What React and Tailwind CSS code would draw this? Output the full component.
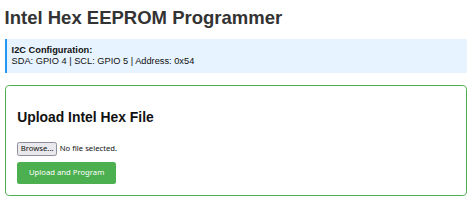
export default function App() {
  return (
    <div className="bg-white min-h-[208px] pl-[4.6px] pr-[7.3px] pt-[6.5px] text-[9.25px] text-[#333]" style={{ fontFamily: '"Liberation Sans", Arial, sans-serif' }}>
      <h1 className="text-[18.5px] font-bold leading-[21.3px] text-[#333]">Intel Hex EEPROM Programmer</h1>
      <div className="mt-[11.7px] border-l-[2.3px] border-[#2196F3] bg-[#e7f3fe] pl-[5px] pr-[5.8px] py-[6px] leading-[10.6px] text-[#111]">
        <div className="font-bold">I2C Configuration:</div>
        <div>SDA: GPIO 4 | SCL: GPIO 5 | Address: 0x54</div>
      </div>
      <div className="mt-[12.7px] border-[1.2px] border-[#4CAF50] rounded-[4.6px] px-[11.6px] pt-[11.6px] pb-[11.3px]">
        <h2 className="mt-[10.6px] text-[13.9px] leading-[16px] font-bold text-[#111]">Upload Intel Hex File</h2>
        <div className="mt-[17.2px] flex items-center gap-[2.5px] text-[7.7px] text-[#111]" style={{ fontFamily: '"Noto Sans", sans-serif' }}>
          <button className="h-[14.4px] w-[40px] flex items-center justify-center bg-[#e9e9ed] border-[0.6px] border-[#8f8f9d] rounded-[2.3px] text-[#111]">Browse...</button>
          <span>No file selected.</span>
        </div>
        <button className="mt-[6px] h-[22px] w-[99px] flex items-center justify-center bg-[#4CAF50] rounded-[2.5px] text-white text-[7.7px]" style={{ fontFamily: '"Noto Sans", sans-serif' }}>Upload and Program</button>
      </div>
    </div>
  );
}
